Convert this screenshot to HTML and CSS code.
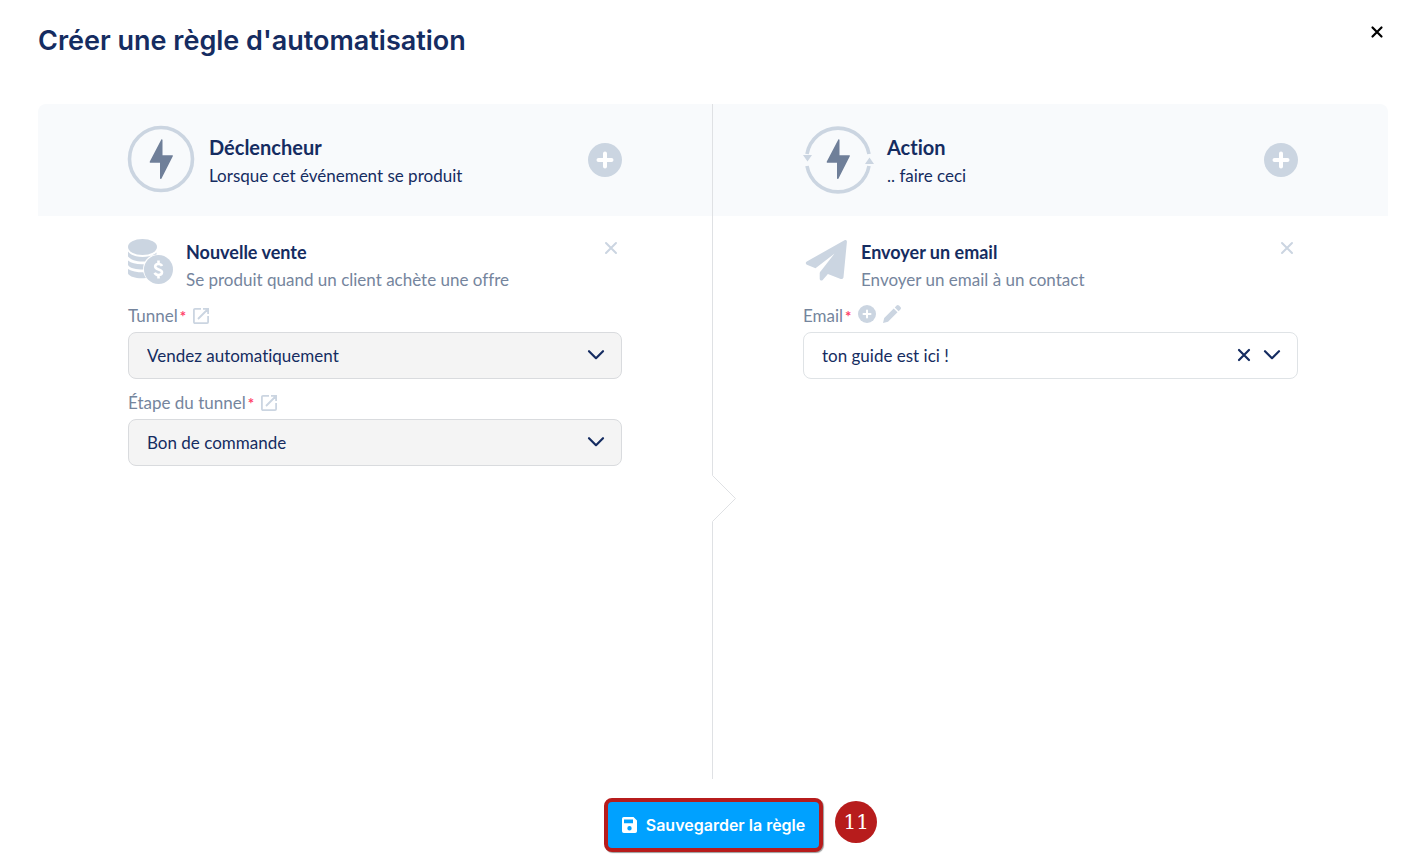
FILE: index.html
```
<!DOCTYPE html>
<html lang="fr">
<head>
  <meta charset="utf-8">
  <title>Créer une règle d'automatisation</title>
  <link rel="stylesheet" href="styles.css">
</head>
<body>
  <header class="page-header">
    <h1>Créer une règle d'automatisation</h1>
    <button class="icon-button close-page" type="button" aria-label="Fermer">
      <svg width="14" height="14" viewBox="0 0 14 14"><path d="M2.5 2.5l9 9M11.5 2.5l-9 9" fill="none" stroke="currentColor" stroke-width="2.2" stroke-linecap="round"/></svg>
    </button>
  </header>

  <main class="rule">
    <section class="column trigger">
      <div class="column-header">
        <svg class="column-icon" width="70" height="70" viewBox="0 0 70 70">
          <circle cx="35" cy="34" r="31.5" fill="none" stroke="#cbd5e1" stroke-width="3.6"/>
          <path d="M35.2 14.8L23.8 36.6a.8.8 0 0 0 .7 1.2H34v15.4c0 .9 1 1.1 1.5.3l11.3-22.2c.3-.6 0-1.1-.7-1.1H36.5V15.1c0-.9-.9-1.1-1.3-.3z" fill="#6f7f99"/>
        </svg>
        <div class="column-title">
          <h2>Déclencheur</h2>
          <p>Lorsque cet événement se produit</p>
        </div>
        <button class="icon-button add" type="button" aria-label="Ajouter un déclencheur">
          <svg width="34" height="34" viewBox="0 0 34 34"><circle cx="17" cy="17" r="17" fill="#cbd5e1"/><path d="M17 10.5v13M10.5 17h13" stroke="#fff" stroke-width="4" stroke-linecap="round"/></svg>
        </button>
      </div>

      <div class="column-body">
        <div class="item">
          <svg class="item-icon" width="46" height="46" viewBox="0 0 46 46" fill="#cbd5e1">
            <ellipse cx="14.5" cy="8" rx="14.5" ry="8"/>
            <path d="M0 12.5c3 4 8.5 5.5 14.5 5.5 5.5 0 10.5-1.2 14-4.5v2c-5 .3-9 2.8-11.5 7C9.5 23 2.5 21 0 17.5z"/>
            <path d="M0 21.5c3.5 3 9 4 15.8 3.7-.6 1.8-.8 3.6-.6 5.3C8.5 30.5 2 29.5 0 26z"/>
            <path d="M0 30c3.5 2.5 9 3.3 15.3 3.3.6 2.3 1.5 4 2.7 5.7C10 39.8 2 38.5 0 34.5z"/>
            <circle cx="30.5" cy="30.5" r="14.5"/>
            <path d="M34 27c-.7-1.5-2-2-3.5-2-2 0-3.3 1-3.3 2.6 0 3.8 6.8 1.9 6.8 5.7 0 1.7-1.5 2.7-3.5 2.7-1.7 0-3.2-.7-3.8-2.3M30.5 21.5V25M30.5 36v3.5" fill="none" stroke="#fff" stroke-width="2.6"/>
          </svg>
          <div class="item-title">
            <h3>Nouvelle vente</h3>
            <p>Se produit quand un client achète une offre</p>
          </div>
          <button class="icon-button remove" type="button" aria-label="Supprimer">
            <svg width="14" height="14" viewBox="0 0 14 14"><path d="M2 2l10 10M12 2L2 12" fill="none" stroke="currentColor" stroke-width="2" stroke-linecap="round"/></svg>
          </button>
        </div>

        <div class="field">
          <div class="field-label">
            <label for="tunnel">Tunnel<span class="required">*</span></label>
            <a class="field-link" href="#" aria-label="Ouvrir le tunnel">
              <svg width="16" height="16" viewBox="0 0 16 16" fill="none" stroke="currentColor" stroke-width="1.8"><path d="M8 .9H2A1.1 1.1 0 0 0 .9 2v12A1.1 1.1 0 0 0 2 15.1h12a1.1 1.1 0 0 0 1.1-1.1V8M10 .9h5.1V6M15 1L5 11"/></svg>
            </a>
          </div>
          <div class="select-box">
            <select id="tunnel" class="filled">
              <option>Vendez automatiquement</option>
            </select>
            <svg class="chevron" width="18" height="12" viewBox="0 0 18 12"><path d="M2 2.2l7 7 7-7" fill="none" stroke="currentColor" stroke-width="2.2" stroke-linecap="round" stroke-linejoin="round"/></svg>
          </div>
        </div>

        <div class="field">
          <div class="field-label">
            <label for="step">Étape du tunnel<span class="required">*</span></label>
            <a class="field-link" href="#" aria-label="Ouvrir l'étape">
              <svg width="16" height="16" viewBox="0 0 16 16" fill="none" stroke="currentColor" stroke-width="1.8"><path d="M8 .9H2A1.1 1.1 0 0 0 .9 2v12A1.1 1.1 0 0 0 2 15.1h12a1.1 1.1 0 0 0 1.1-1.1V8M10 .9h5.1V6M15 1L5 11"/></svg>
            </a>
          </div>
          <div class="select-box">
            <select id="step" class="filled">
              <option>Bon de commande</option>
            </select>
            <svg class="chevron" width="18" height="12" viewBox="0 0 18 12"><path d="M2 2.2l7 7 7-7" fill="none" stroke="currentColor" stroke-width="2.2" stroke-linecap="round" stroke-linejoin="round"/></svg>
          </div>
        </div>

        <!-- arrow on the separator -->
        <svg class="arrow" width="25" height="47" viewBox="0 0 25 47"><path d="M0 0h1v.5l23 23L1 46.5v.5H0z" fill="#fff"/><path d="M.5 0v.5l23 23-23 23v.5" fill="none" stroke="#dfe1e4"/></svg>
      </div>
    </section>

    <section class="column action">
      <div class="column-header">
        <svg class="column-icon" width="70" height="70" viewBox="0 0 70 70">
          <g fill="none" stroke="#cbd5e1" stroke-width="3.6">
            <path d="M4 29A31.5 31.5 0 0 1 66 29"/>
            <path d="M4 41A31.5 31.5 0 0 0 66 41"/>
          </g>
          <path d="M0 30h9l-4.5 6.5zM62 39h9l-4.5-6.5z" fill="#cbd5e1"/>
          <path d="M35.2 14.8L23.8 36.6a.8.8 0 0 0 .7 1.2H34v15.4c0 .9 1 1.1 1.5.3l11.3-22.2c.3-.6 0-1.1-.7-1.1H36.5V15.1c0-.9-.9-1.1-1.3-.3z" fill="#6f7f99"/>
        </svg>
        <div class="column-title">
          <h2>Action</h2>
          <p>.. faire ceci</p>
        </div>
        <button class="icon-button add" type="button" aria-label="Ajouter une action">
          <svg width="34" height="34" viewBox="0 0 34 34"><circle cx="17" cy="17" r="17" fill="#cbd5e1"/><path d="M17 10.5v13M10.5 17h13" stroke="#fff" stroke-width="4" stroke-linecap="round"/></svg>
        </button>
      </div>

      <div class="column-body">
        <div class="item">
          <svg class="item-icon" width="46" height="46" viewBox="0 0 46 46" fill="#cbd5e1">
            <path d="M41.5 1.2L3.8 22.5c-1.5.9-1.3 2.6.1 3.2l8.6 3.5L31.5 14.6 18.3 31.5c-1 1-1.6 1.8-1.6 3v5.3c0 1.8 2 2.3 3 1.1l5.2-6 12.8 5c1.3.5 2.6-.2 2.8-1.7L43.9 3c.2-1.7-1.1-2.6-2.4-1.8z"/>
          </svg>
          <div class="item-title">
            <h3>Envoyer un email</h3>
            <p>Envoyer un email à un contact</p>
          </div>
          <button class="icon-button remove" type="button" aria-label="Supprimer">
            <svg width="14" height="14" viewBox="0 0 14 14"><path d="M2 2l10 10M12 2L2 12" fill="none" stroke="currentColor" stroke-width="2" stroke-linecap="round"/></svg>
          </button>
        </div>

        <div class="field">
          <div class="field-label">
            <label for="email">Email<span class="required">*</span></label>
            <button class="icon-button field-action" type="button" aria-label="Créer un email">
              <svg width="18" height="18" viewBox="0 0 18 18"><circle cx="9" cy="9" r="9" fill="currentColor"/><path d="M9 5.5v7M5.5 9h7" stroke="#fff" stroke-width="2" stroke-linecap="round"/></svg>
            </button>
            <button class="icon-button field-action" type="button" aria-label="Modifier l'email">
              <svg width="18" height="18" viewBox="0 0 18 18" fill="currentColor"><path d="M0 18l1.2-5L10.7 3.5l3.8 3.8L5 16.8zM11.8 2.4L13.6.6c.8-.8 1.6-.8 2.4 0l1.4 1.4c.8.8.8 1.6 0 2.4l-1.8 1.8z"/></svg>
            </button>
          </div>
          <div class="select-box">
            <select id="email">
              <option>ton guide est ici !</option>
            </select>
            <button class="icon-button clear" type="button" aria-label="Effacer">
              <svg width="14" height="14" viewBox="0 0 14 14"><path d="M2 2l10 10M12 2L2 12" fill="none" stroke="currentColor" stroke-width="2.2" stroke-linecap="round"/></svg>
            </button>
            <svg class="chevron" width="18" height="12" viewBox="0 0 18 12"><path d="M2 2.2l7 7 7-7" fill="none" stroke="currentColor" stroke-width="2.2" stroke-linecap="round" stroke-linejoin="round"/></svg>
          </div>
        </div>
      </div>
    </section>
  </main>

  <footer class="page-footer">
    <div class="save">
      <button class="save-button" type="submit">
        <svg width="15" height="16" viewBox="0 0 15 16"><path fill-rule="evenodd" d="M1.8 0h9.7L15 3.5v10.7A1.8 1.8 0 0 1 13.2 16H1.8A1.8 1.8 0 0 1 0 14.2V1.8A1.8 1.8 0 0 1 1.8 0zM2 2.5v3.8h9V2.5zM7.5 9a2.2 2.2 0 1 0 0 4.4 2.2 2.2 0 0 0 0-4.4z" fill="#fff"/></svg>
        Sauvegarder la règle
      </button>
      <span class="step-badge">11</span>
    </div>
  </footer>
</body>
</html>
```

FILE: styles.css
```
* {
  box-sizing: border-box;
}
body {
  display: flex;
  flex-direction: column;
  min-height: 100vh;
  margin: 0;
  background: #fff;
  color: #152c61;
  font-family: Lato, sans-serif;
  font-size: 17px;
  font-variant-ligatures: none;
  line-height: 24px;
}
h1, h2, h3, p {
  margin: 0;
}
svg {
  display: block;
}
.icon-button {
  padding: 0;
  border: 0;
  background: none;
  color: inherit;
  cursor: pointer;
}

.page-header {
  display: flex;
  justify-content: space-between;
  align-items: flex-start;
  padding: 24px 43px 46px 38px;
}
h1 {
  font-family: Inter, sans-serif;
  font-size: 27px;
  font-weight: 600;
  line-height: 34px;
}
.close-page {
  margin-top: 1px;
  color: #000;
}

.rule {
  display: grid;
  grid-template-columns: 1fr 1fr;
  flex: 1;
  margin: 0 39px 0 38px;
}
.column {
  display: flex;
  flex-direction: column;
}
.trigger {
  border-right: 1px solid #dfe1e4;
}
.column-header {
  display: flex;
  align-items: center;
  height: 112px;
  padding: 0 90px;
  background: #f8fafc;
}
.trigger .column-header {
  border-radius: 8px 0 0 0;
}
.action .column-header {
  border-radius: 0 8px 0 0;
}
.column-icon {
  margin-left: -2px;
  margin-right: 13px;
  overflow: visible;
}
.action .column-icon {
  margin-left: 0;
  margin-right: 14px;
}
.column-title {
  flex: 1;
  padding-top: 3px;
}
h2 {
  font-size: 20px;
  font-weight: 700;
  line-height: 24px;
}
.column-title p {
  margin-top: 5px;
}

.column-body {
  position: relative;
  flex: 1;
  padding: 22px 90px 0;
}
.item {
  display: flex;
  align-items: flex-start;
}
.item-icon {
  margin-top: 1px;
}
.item-title {
  flex: 1;
  margin-left: 12px;
  padding-top: 2px;
}
h3 {
  font-size: 18px;
  font-weight: 700;
  line-height: 24px;
}
.item-title p {
  margin-top: 4px;
  color: #75859d;
}
.remove {
  margin: 3px 4px 0 0;
  color: #cbd5e1;
}

.field {
  margin-top: 12px;
}
.field-label {
  display: flex;
  align-items: center;
  height: 24px;
  margin-bottom: 4px;
  color: #75859d;
}
.required {
  margin-left: 2px;
  color: #ff4069;
  font-size: 15px;
  font-weight: 700;
}
.field-link {
  margin-left: 7px;
  color: #cbd5e1;
}
.field-action {
  margin: 0 0 4px 7px;
  color: #cbd5e1;
}
.select-box {
  position: relative;
}
select {
  appearance: none;
  display: block;
  width: 100%;
  height: 47px;
  padding: 0 60px 0 18px;
  border: 1px solid #dfe3e6;
  border-radius: 8px;
  background: #fff;
  color: #152c61;
  font: inherit;
}
select.filled {
  border-color: #d9dbde;
  background: #f4f4f4;
}
.chevron {
  position: absolute;
  top: 17px;
  right: 17px;
  pointer-events: none;
}
.clear {
  position: absolute;
  top: 16px;
  right: 47px;
}
.arrow {
  position: absolute;
  top: 50%;
  right: -25px;
  margin-top: -23px;
}

.page-footer {
  display: flex;
  justify-content: center;
  padding: 19px 0 9px;
}
.save {
  position: relative;
}
.save-button {
  display: flex;
  align-items: center;
  gap: 9px;
  height: 54px;
  padding: 0 14px;
  border: 4px solid #b71c1c;
  border-radius: 8px;
  background: #00a1ff;
  box-shadow: 1px 1px 1px rgba(0, 0, 0, 0.4);
  color: #fff;
  font-family: Inter, sans-serif;
  font-size: 16px;
  font-weight: 600;
  cursor: pointer;
}
.step-badge {
  position: absolute;
  top: 3px;
  left: 100%;
  width: 42px;
  height: 42px;
  margin-left: 12px;
  border-radius: 50%;
  background: #b71c1c;
  color: #fff;
  font-family: "DejaVu Serif", serif;
  font-size: 20px;
  line-height: 42px;
  text-align: center;
}
```
